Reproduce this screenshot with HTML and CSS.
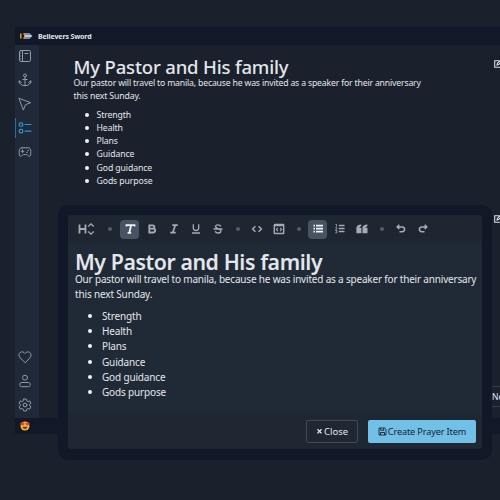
FILE: index.html
```
<!DOCTYPE html>
<html lang="en">
<head>
<meta charset="utf-8">
<title>Believers Sword</title>
<link rel="stylesheet" href="styles.css">
</head>
<body>
<div class="window">
  <header class="titlebar">
    <svg class="logo" viewBox="0 0 13 8"><path d="M.8 1.500v5" stroke="#e0a02c" stroke-width="1.500"/><path d="M4 1h5.500l3 3-3 3H4z" fill="#7189a5"/><path d="M3.300 2h3M3.300 6h3" stroke="#d48c27" stroke-width="1.300"/><path d="M4.500 4h7" stroke="#dce6f0" stroke-width="1.400"/></svg>
    <span class="app-name">Believers Sword</span>
  </header>
  <div class="main">
    <nav class="sidebar">
      <div class="group">
        <a class="nav"><svg viewBox="0 0 14 14"><rect x="1.500" y="1.500" width="11" height="11" rx="1.300"/><path d="M4.500 1.500v11M1.500 4h1M1.500 7h1M1.500 10h1M7 4.500h3"/></svg></a>
        <a class="nav"><svg viewBox="0 0 14 14"><circle cx="7" cy="2.500" r="1.500"/><path d="M7 4v8.700M4.800 6.500h4.400M1.200 9.800v-2l2 1.500M12.800 9.800v-2l-2 1.500M1.200 8.200c.2 3 2.600 4.500 5.800 4.500s5.600-1.500 5.800-4.500"/></svg></a>
        <a class="nav"><svg viewBox="0 0 14 14"><path d="M1.300 1.400 12.700 5.700 7.500 7.700 5.500 12.700z"/></svg></a>
        <a class="nav active"><svg viewBox="0 0 14 14"><rect x="1.300" y="1.800" width="3.400" height="3.400" rx="1"/><rect x="1.300" y="8.400" width="3.400" height="3.400" rx="1"/><path d="M7 3.500h6M7 10.100h6"/></svg></a>
        <a class="nav"><svg viewBox="0 0 14 14"><path d="M4 2.800h6c2 0 2.800 1.200 2.800 3.700 0 3.300-.2 4.900-1.500 4.900-1.100 0-1.500-1.800-2.700-1.800H5.400c-1.200 0-1.600 1.800-2.700 1.800-1.300 0-1.500-1.600-1.500-4.900 0-2.500.8-3.700 2.800-3.700z"/><path d="M4.500 5v2.600M3.200 6.300h2.600M8.600 7.300h.8M9.700 5.400h.8"/></svg></a>
      </div>
      <div class="group">
        <a class="nav"><svg viewBox="0 0 14 14"><path d="M7 12.500 2 7.700C.5 6 .7 3.700 2.200 2.500 3.800 1.300 5.900 1.800 7 3.500c1.100-1.700 3.200-2.200 4.800-1 1.500 1.200 1.700 3.500.2 5.200z"/></svg></a>
        <a class="nav"><svg viewBox="0 0 14 14"><circle cx="7" cy="3.700" r="2.500"/><path d="M3.700 8.500h6.600c1.300 0 1.900.8 1.900 2 0 1.600-.5 2.200-1.700 2.200h-7c-1.200 0-1.700-.6-1.700-2.200 0-1.200.6-2 1.900-2z"/></svg></a>
        <a class="nav"><svg viewBox="0 0 14 14"><path d="M5.700 1h2.600l.4 1.800 1.200.7 1.800-.6L13 5.200l-1.400 1.200v1.200L13 8.800l-1.300 2.300-1.800-.6-1.200.7-.4 1.800H5.700l-.4-1.800-1.200-.7-1.800.6L1 8.800l1.400-1.200V6.400L1 5.200l1.300-2.300 1.800.6 1.200-.7z"/><circle cx="7" cy="7" r="1.900"/></svg></a>
      </div>
    </nav>
    <article class="note">
      <h1>My Pastor and His family</h1>
      <p>Our pastor will travel to manila, because he was invited as a speaker for their anniversary<br><span class="second">this next Sunday.</span></p>
      <ul><li>Strength</li><li>Health</li><li>Plans</li><li>Guidance</li><li>God guidance</li><li>Gods purpose</li></ul>
    </article>
    <aside class="edge">
      <svg class="edit first" viewBox="0 0 8 8"><path d="M5.500.7H.7v6.600h6.600V4M3 5l.4-1.700L6.700.5l1 1L4.500 4.600z"/></svg>
      <svg class="edit" viewBox="0 0 8 8"><path d="M5.500.7H.7v6.600h6.600V4M3 5l.4-1.700L6.700.5l1 1L4.500 4.600z"/></svg>
      <span class="next">Next</span>
    </aside>
  </div>
  <footer class="status">
    <svg class="face" viewBox="0 0 10 10"><circle cx="5" cy="5" r="4.500" fill="#f6b52f"/><path d="M2.600 4.800.5 3.100C0 2 1 1 2.500 1.900 3.800.9 4.900 2 4.300 3.200zM7.400 4.800 5.700 3.200C5.100 2 6.200.9 7.500 1.900 9 1 10 2 9.500 3.100z" fill="#ed3938"/><path d="M2.600 5.800h4.800C7 8.700 3 8.700 2.600 5.800z" fill="#633a20"/></svg>
  </footer>
</div>
<section class="modal">
  <div class="panel">
    <div class="toolbar">
      <button class="tool heading"><svg viewBox="0 0 20 14"><path d="M3.500 2.500v9M9.500 2.500v9M3.500 7h6" stroke-width="1.800"/><path d="m12.300 4.500 2.700-2.700 2.700 2.700M12.300 9.500l2.700 2.700 2.700-2.700" stroke-width="1.300"/></svg></button>
      <i class="dot"></i>
      <button class="tool on"><svg viewBox="0 0 12 12"><path d="M2.500 3.600V2.200h8v1.400M7 2.200 5.400 9.800M3.600 9.800h3.600" stroke-width="1.800"/></svg></button>
      <button class="tool"><svg viewBox="0 0 12 12"><path d="M3.300 2.300h3.400c2.300 0 2.300 3.400 0 3.400H3.300zM3.300 5.700h3.900c2.600 0 2.600 3.800 0 3.800H3.300z" stroke-width="1.800"/></svg></button>
      <button class="tool"><svg viewBox="0 0 12 12"><path d="M4.300 2.200h5.500M2.200 9.700h5.500M7.300 2.200 4.700 9.700" stroke-width="1.700"/></svg></button>
      <button class="tool"><svg viewBox="0 0 12 12"><path d="M3.300 1.300v3.800c0 3.300 5.400 3.300 5.400 0V1.300M2 10h8" stroke-width="1.300"/></svg></button>
      <button class="tool"><svg viewBox="0 0 12 12"><path d="M8.800 3.500C8 1.300 3.600 1.300 3.600 3.700 3.600 5.500 8.900 5.700 8.900 8c0 2.500-4.900 2.700-5.700.2M1.500 6h9" stroke-width="1.400"/></svg></button>
      <i class="dot"></i>
      <button class="tool"><svg viewBox="0 0 12 12"><path d="M4.400 3.200 1.600 6l2.800 2.800M7.600 3.200 10.400 6 7.600 8.800" stroke-width="1.500"/></svg></button>
      <button class="tool"><svg viewBox="0 0 12 12"><rect x="1.300" y="1.500" width="9.400" height="9" rx=".5" stroke-width="1.400"/><path d="M1.300 2.500h9.400" stroke-width="1.500"/><path d="M4.900 4.900 3.300 6.500l1.600 1.600M7.100 4.900l1.600 1.600-1.600 1.600" stroke-width="1.100"/></svg></button>
      <i class="dot"></i>
      <button class="tool on"><svg viewBox="0 0 12 12"><path d="M4 2.700h7M4 5.700h7M4 8.700h7M1.500 2.700h1.500M1.500 5.700h1.500M1.500 8.700h1.500" stroke-width="1.700"/></svg></button>
      <button class="tool"><svg viewBox="0 0 12 12"><path d="M4.800 2.500h5.700M4.800 5.500h5.700M4.800 8.500h5.700" stroke-width="1.500"/><path d="M1.500 1.500h1v2M1.300 4.700h1.500v1.500H1.500M1.300 7.500h1.500v2.300H1.300" stroke-width=".9"/></svg></button>
      <button class="tool"><svg viewBox="0 0 12 12"><path class="solid" d="M5.300 1.500v1.700C4 3.300 3.500 3.800 3.500 4.800h1.900v5.400H.4V5.300C.4 3 2 1.500 5.300 1.500zM11.400 1.500v1.700C10.100 3.300 9.600 3.800 9.600 4.800h1.900v5.400h-5V5.300c0-2.300 1.600-3.800 4.900-3.800z"/></svg></button>
      <i class="dot"></i>
      <button class="tool"><svg viewBox="0 0 12 12"><path d="M4.300 1.800 2.200 3.900 4.300 6M2.500 3.900h4.700c3.200 0 3.200 4.800 0 4.800H4.500" stroke-width="1.500"/></svg></button>
      <button class="tool"><svg viewBox="0 0 12 12"><path d="m7.700 1.800 2.100 2.100L7.700 6M9.500 3.900H4.800c-3.200 0-3.200 4.800 0 4.800h2.700" stroke-width="1.500"/></svg></button>
    </div>
    <div class="editor">
      <h1>My Pastor and His family</h1>
      <p>Our pastor will travel to manila, because he was invited as a speaker for their anniversary<br><span class="second">this next Sunday.</span></p>
      <ul><li>Strength</li><li>Health</li><li>Plans</li><li>Guidance</li><li>God guidance</li><li>Gods purpose</li></ul>
    </div>
    <div class="actions">
      <button class="btn close"><svg viewBox="0 0 7 7"><path d="m1.500 1.200 4 4.200M5.500 1.200l-4 4.200" stroke-width="1.300"/></svg><span>Close</span></button>
      <button class="btn create"><svg viewBox="0 0 9 9"><path d="M1 1h5.700L8 2.300V8H1zM2.700 1v2.300h3V1M2.500 8V5.500h4V8" stroke-width=".9"/></svg><span>Create Prayer Item</span></button>
    </div>
  </div>
</section>
</body>
</html>
```
FILE: styles.css
```
* { box-sizing: border-box; }
body {
  margin: 0;
  width: 500px;
  height: 500px;
  overflow: hidden;
  position: relative;
  padding: 27px 0 0 15px;
  background: #1b212c;
  color: #e3e6ea;
  font-family: "Noto Sans", "Open Sans", sans-serif;
}
svg { display: block; fill: none; stroke: currentColor; flex: none; }
h1, p, ul { margin: 0; }
button { font: inherit; padding: 0; border: 0; background: none; color: inherit; }
.window { display: flex; flex-direction: column; height: 407px; background: #1a212c; }
.titlebar { height: 18px; background: #111827; display: flex; align-items: center; padding-left: 5px; gap: 5px; }
.logo { width: 13px; height: 8px; stroke: none; }
.app-name { font-size: 7px; font-weight: 700; white-space: nowrap; letter-spacing: -.12px; }
.main { flex: 1; min-height: 0; display: flex; }
.sidebar { width: 24px; background: #1f2937; display: flex; flex-direction: column; justify-content: space-between; padding-bottom: 1px; }
.nav { display: flex; align-items: center; height: 24px; padding-left: 3px; color: #929aa5; }
.group:first-child { margin-top: -1px; }
.nav svg { width: 14px; height: 14px; stroke-width: 1; stroke-linejoin: round; stroke-linecap: round; }
.nav.active { color: #3193d2; height: 20px; margin: 2px 0; padding-left: 2px; border-left: 1px solid #286f9f; }
.nav.active svg { stroke-width: 1.200; }
.note { width: 400px; padding: 11px 0 0 34.500px; }
.note h1 { font-size: 18.500px; line-height: 22px; font-weight: 500; white-space: nowrap; letter-spacing: -.17px; }
.note p { font-size: 8.700px; line-height: 13px; margin-top: -1px; white-space: nowrap; letter-spacing: -.18px; }
.note .second { letter-spacing: -.14px; }
.note ul { font-size: 8.700px; line-height: 13.250px; list-style: none; padding-left: 23px; margin-top: 5.500px; letter-spacing: -.1px; }
li { position: relative; }
li::before { content: ""; position: absolute; left: -12px; top: 4px; width: 4px; height: 4px; border-radius: 50%; background: #f0f2f4; }
.edge { flex: 1; padding: 15px 0 0 53px; overflow: hidden; }
.edit { width: 8px; height: 8px; stroke-width: 1.100; margin: 147px 0 0 2px; color: #d8e0e7; }
.edit.first { margin-top: 0; }
.next { display: flex; align-items: center; width: 40px; margin-top: 163px; margin-left: -4px; padding-left: 3px; height: 21px; border: 1px solid #343e4b; font-size: 8.500px; }
.status { height: 16px; background: #111827; padding: 3px 0 0 5px; }
.face { width: 10px; height: 10px; stroke: none; }
.modal { position: absolute; left: 58px; top: 205px; width: 434px; height: 255px; border-radius: 10px; padding: 10px; background: #111827; }
.panel { height: 234px; display: flex; flex-direction: column; border-radius: 3px; overflow: hidden; background: #1f2733; }
.toolbar { display: flex; align-items: center; height: 28px; padding-left: 8px; color: #a5acb4; background: #1e2631; }
.tool { width: 19px; height: 19px; margin-right: 3px; border-radius: 4px; display: flex; align-items: center; justify-content: center; flex: none; }
.tool svg { width: 12px; height: 12px; }
.tool.heading { width: 20px; }
.tool.heading svg { width: 20px; height: 14px; }
.tool.on { background: #485362; color: #f0f2f4; }
.solid { fill: currentColor; stroke: none; }
.dot { width: 4px; height: 4px; border-radius: 50%; background: #535e69; margin: 0 7px 0 6px; flex: none; }
.heading + .dot { margin: 0 8px 0 9px; }
.editor { height: 169px; padding: 6px 0 0 7px; background: #202a37; }
.editor h1 { font-size: 21.300px; line-height: 26px; font-weight: 600; white-space: nowrap; letter-spacing: -.42px; }
.editor p { font-size: 10px; line-height: 15px; margin-top: -3px; white-space: nowrap; letter-spacing: -.19px; }
.editor .second { letter-spacing: -.16px; }
.editor ul { font-size: 10px; line-height: 15.200px; list-style: none; padding-left: 27px; margin-top: 7px; letter-spacing: -.16px; }
.editor li::before { left: -14px; top: 5px; }
.actions { height: 37px; display: flex; justify-content: flex-end; align-items: center; gap: 10px; padding: 2px 6px 0 0; }
.btn { height: 23px; border-radius: 2px; font-size: 9.500px; display: flex; align-items: center; justify-content: center; white-space: nowrap; }
.btn.close { width: 52px; border: 1px solid #414b57; }
.btn.close svg { width: 7px; height: 7px; margin-right: 1px; }
.btn.create { width: 108px; color: #18232e; background: #70c0e8; font-size: 9.200px; letter-spacing: -.16px; }
.btn.create svg { width: 9px; height: 9px; margin-right: 1px; }
```
